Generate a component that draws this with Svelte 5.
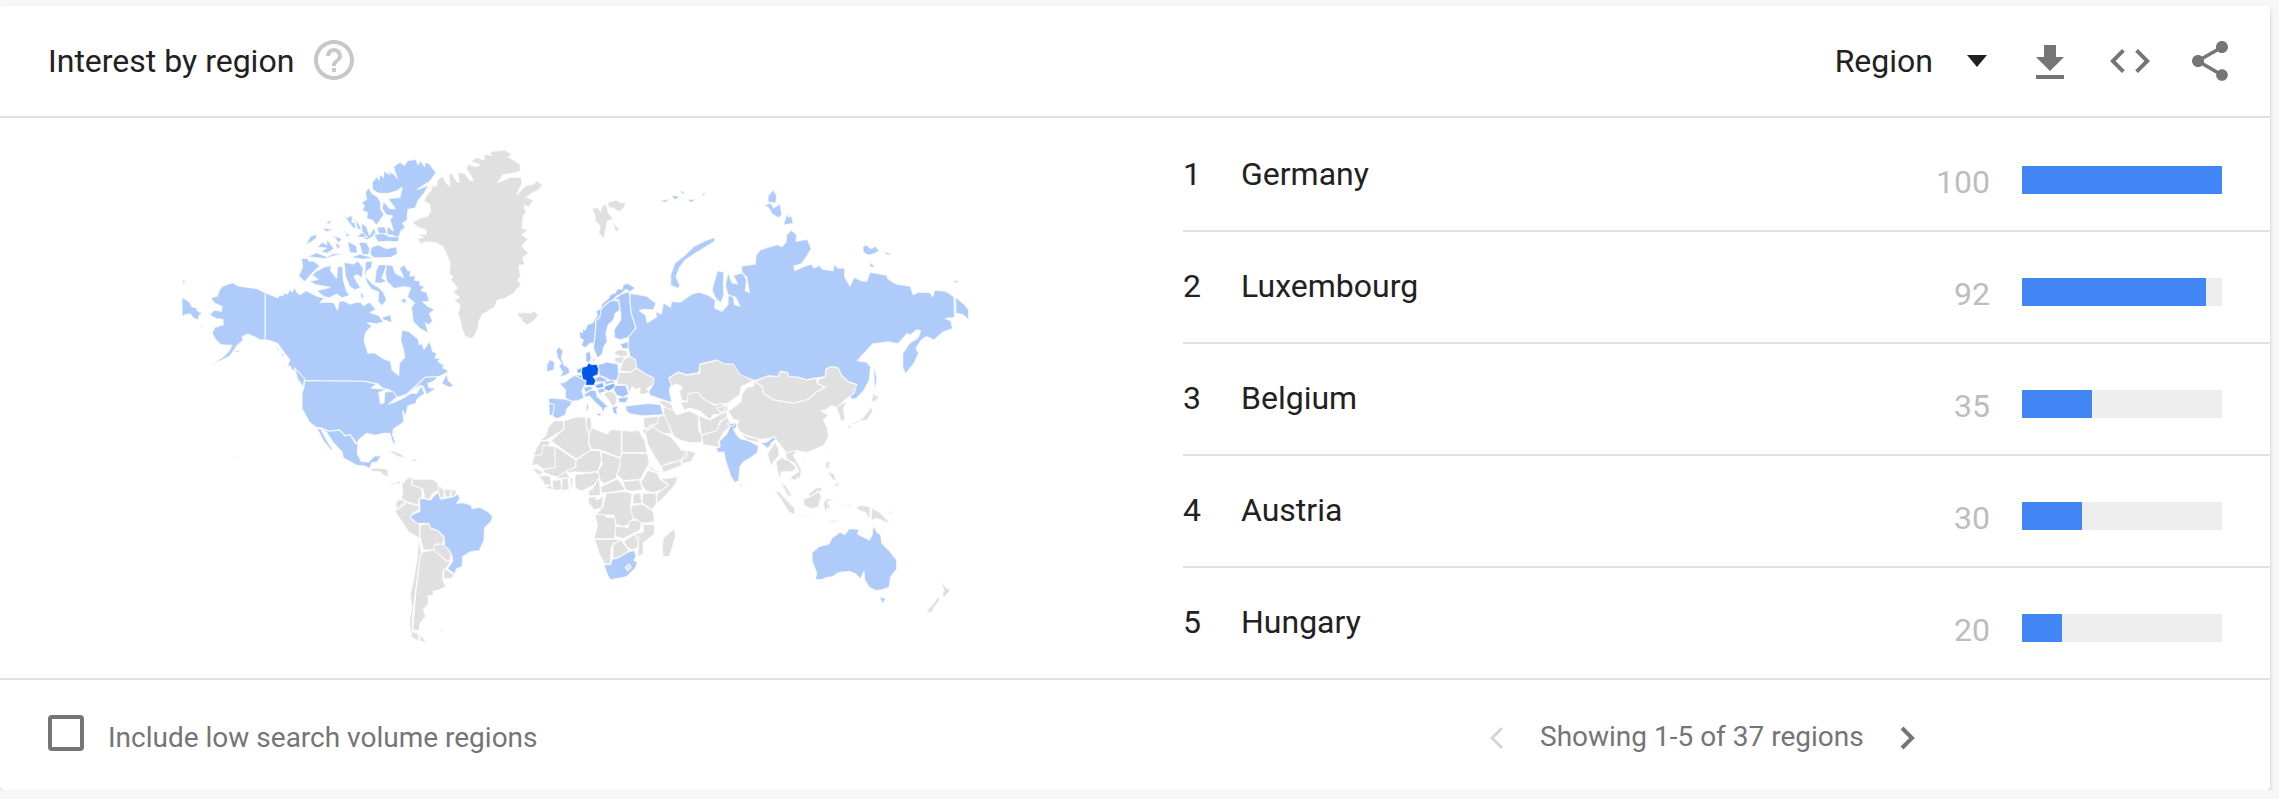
<script>
  const regions = [
    { name: 'Germany', value: 100 },
    { name: 'Luxembourg', value: 92 },
    { name: 'Belgium', value: 35 },
    { name: 'Austria', value: 30 },
    { name: 'Hungary', value: 20 }
  ];

  const B = '#aecbfa';
  const E = '#a8c6fa';
  const M = '#8ab2f8';
  const G = '#e0e0e0';

  // Each sheet of the map has its own origin; shapes are in thirds of a pixel.
  const sheets = [
    {
      x: 170, y: 140,
      shapes: [
        [B, 'M286,458 262,446 240,443 215,440 200,435 188,428 170,434 155,440 146,454 142,468 122,474 134,490 156,500 154,514 134,510 118,524 138,536 158,538 160,554 134,562 126,580 138,600 152,614 186,616 176,634 160,650 118,678 160,658 180,648 200,618 220,600 216,590 234,582 256,592 270,600 286,600Z'],
        [B, 'M36,470 58,486 66,500 80,504 82,512 98,520 88,526 84,540 70,534 60,522 46,524 36,530Z M36,420 48,424 40,432Z M88,554 104,558 98,561Z M194,634 212,630 204,638Z'],
        [B, 'M286,458 324,474 328,464 340,468 340,458 352,462 360,448 366,456 374,442 380,456 390,464 408,452 440,468 464,474 450,488 476,486 492,488 502,510 508,484 520,482 540,492 560,486 574,488 580,498 598,486 618,508 600,518 626,526 640,546 620,552 592,548 606,558 588,576 582,600 594,640 614,638 640,656 662,664 666,690 686,706 688,670 704,652 700,628 692,600 696,570 716,574 730,586 744,596 748,614 756,610 762,628 770,616 778,604 784,620 788,634 800,640 796,654 812,656 804,664 822,676 818,684 832,688 832,698 806,710 766,712 744,732 710,762 684,772 660,750 640,746 624,732 584,724 404,722 390,722 378,712 374,690 366,692 362,680 352,676 360,660 344,640 322,610 300,602 286,600Z'],
        [B, 'M404,722 584,724 620,732 604,744 650,748 626,758 632,792 642,788 644,756 668,754 682,770 656,792 680,784 700,774 722,760 740,760 754,736 764,762 750,770 740,780 738,790 714,798 706,830 698,812 702,846 670,868 668,884 678,914 668,908 660,880 640,880 616,886 590,880 566,900 562,912 540,884 526,888 508,870 478,874 455,864 438,862 418,846 396,806 396,760 402,740Z'],
        [B, 'M720,758 744,732 766,712 806,710 790,724 774,730 776,742 798,746 770,764 760,740 750,736Z M814,730 824,714 832,700 834,720 852,738 836,742Z'],
        [B, 'M440,864 478,874 508,870 526,888 540,884 556,910 564,912 562,940 574,964 596,966 612,948 634,946 622,966 606,968 600,986 584,978 560,976 520,954 516,936 490,908 470,878 454,870 470,900 488,928 484,932 460,902Z'],
        [B, 'M606,128 620,110 628,120 628,102 640,112 642,92 658,104 650,94 672,102 682,116 670,80 690,66 704,76 712,62 738,58 744,74 752,62 764,80 764,68 776,70 788,84 798,98 780,124 742,148 776,136 762,160 744,182 736,204 714,208 712,226 712,240 698,250 706,262 692,274 684,302 670,286 650,284 652,258 670,272 660,240 668,228 648,224 636,206 640,184 660,206 676,206 654,176 690,172 696,142 682,152 656,160 626,160 608,150Z'],
        [B, 'M596,142 606,160 622,170 632,186 632,206 642,224 620,256 606,240 590,236 592,218 576,210 584,198 574,190 590,176 586,158Z'],
        [B, 'M610,282 640,280 660,290 688,290 684,306 650,304 624,306Z M604,322 624,314 650,326 680,320 682,342 664,352 612,354 600,342Z M566,306 590,308 600,326 596,344 578,344Z M532,304 546,310 560,318 562,340 540,338Z M574,248 590,260 598,286 612,262 620,284 590,300 576,292Z M620,262 644,260 652,280 626,280Z'],
        [B, 'M516,218 530,232 548,226 546,248 558,246 562,268 550,264 538,250Z M552,236 558,264 576,272 566,250Z M518,262 528,280 542,284 530,292Z M550,190 556,206Z M576,276 592,292 560,292Z'],
        [B, 'M406,316 422,288 442,282 438,296 424,306Z M442,322 456,306 470,314 470,296 492,326 472,340 452,336 470,324Z M464,250 486,238 480,252Z M454,264 492,268 470,276Z M490,286 516,296 506,310Z M494,306 512,318 502,328Z M412,350 440,338 470,350 492,340 520,342 500,346 464,356Z'],
        [B, 'M394,356 412,354 418,364 430,362 450,378 430,396 404,426 386,408 398,380Z'],
        [B, 'M438,394 460,382 484,376 482,392 500,414 502,380 518,378 520,420 530,454 540,466 516,474 500,462 478,474 462,470 440,452 480,442 436,434 418,424 444,418 426,406Z'],
        [B, 'M522,366 550,372 564,362 580,384 576,414 560,404 552,410 572,444 554,450 540,440 526,410Z M586,366 608,362 604,384 590,394 588,410 606,430 628,444 640,456 650,480 636,498 624,484 626,456 604,448 590,428 584,400Z M568,452 582,466 576,480Z M540,352 570,342 612,354 580,358Z'],
        [B, 'M626,374 650,374 644,392 636,414 650,424 632,430 614,428 618,392Z M650,374 668,376 676,400 700,412 688,384 704,374 712,390 722,394 720,408 736,406 734,420 750,424 750,436 764,438 754,452 770,456 778,484 758,486 776,500 794,508 778,522 788,544 776,556 766,548 776,580 750,566 730,546 724,500 734,490 712,470 722,444 700,440 672,446 650,424 646,400Z M636,532 662,524 666,548 640,540Z M692,478 706,474 710,486 698,490Z'],
        [B, 'M190,952 196,956 193,961Z M318,616 328,628 324,634Z M330,632 342,646 338,654Z M342,668 348,686 342,680Z M374,684 404,716 400,740 384,720Z']
      ]
    },
    {
      x: 370, y: 140,
      shapes: [
        [G, 'M126,248 146,236 172,228 182,212 178,192 162,184 170,166 182,152 186,140 200,136 202,120 218,108 228,128 240,138 236,106 244,98 262,126 268,126 262,96 284,100 300,122 310,120 288,84 296,72 318,80 330,74 302,66 320,52 342,60 342,42 364,46 360,34 404,30 428,44 414,50 450,72 452,92 440,98 400,104 384,128 420,112 454,112 456,132 440,164 468,136 490,132 500,122 518,134 506,150 486,160 470,172 492,180 476,200 462,196 468,220 460,226 456,264 474,270 456,284 474,298 456,318 476,340 458,354 466,374 446,376 452,410 444,420 454,436 440,448 432,460 404,476 382,480 374,502 350,516 338,522 326,546 324,566 312,590 304,596 286,590 276,568 270,540 264,520 270,496 252,480 268,472 248,456 262,444 242,420 248,410 238,400 240,368 226,336 218,320 196,308 170,306 152,312 140,296 160,292 140,284 168,282 168,270 144,262Z'],
        [G, 'M444,516 458,520 452,510 466,518 482,520 492,512 506,526 492,542 472,556 458,546 454,536 444,530Z'],
        [G, 'M666,206 682,202 692,214 696,196 710,194 714,216 730,236 712,244 708,266 702,296 686,280 690,258 676,244 674,226Z M712,186 740,180 752,188 768,186 762,204 746,216 732,206 716,202Z M728,244 736,256 750,268 738,276 732,262Z']
      ]
    },
    {
      x: 520, y: 280,
      shapes: [
        [E, 'M178,154 188,158 186,148 196,150 202,134 218,128 232,106 228,92 240,88 246,72 262,58 272,44 286,38 292,26 306,28 310,14 324,10 346,24 330,36 318,28 304,42 290,48 280,60 266,66 246,84 240,112 228,122 226,160 222,190 210,190 196,204 184,196 190,180 180,174Z'],
        [E, 'M244,86 266,66 280,60 296,64 300,90 286,100 280,120 264,136 258,160 262,184 252,200 246,224 232,234 220,204 226,160 228,122 240,112Z'],
        [E, 'M280,60 304,42 328,34 330,64 334,100 342,124 348,144 330,170 302,180 284,174 282,150 302,120 302,96 296,60Z'],
        [E, 'M196,220 210,212 214,236 206,250 198,244Z M216,238 226,236 222,248Z M300,192 326,184 326,206 308,206Z'],
        [B, 'M116,200 130,212 124,232 132,254 146,264 150,278 136,286 118,292 128,276 116,258 124,250 112,232 108,212Z M80,254 90,238 104,246 102,270 80,276Z'],
        [G, 'M282,216 300,208 320,212 324,226 310,232 290,226Z M284,232 310,230 314,240 304,252 284,246Z M312,236 330,230 346,238 350,264 336,278 298,272Z'],
        [G, 'M296,276 330,278 350,264 378,282 402,294 402,312 380,326 390,336 370,344 358,340 360,324 346,328 336,320 326,342 322,316 306,314 290,312Z'],
        [E, 'M234,254 260,246 294,252 296,282 290,302 272,302 254,292 238,286Z'],
        [M, 'M170,268 188,262 186,278 172,280Z M166,284 186,286 188,300Z'],
        [B, 'M118,310 136,306 150,294 164,286 190,298 200,306 192,318 186,334 192,354 174,362 154,364 136,354 136,330Z'],
        [B, 'M84,356 102,354 136,358 156,364 152,376 140,388 136,406 110,416 96,408 98,380 90,372 86,364Z'],
        [B, 'M86,370 104,374 98,406 88,406Z'],
        [E, 'M190,322 212,318 220,328 196,338Z'],
        [M, 'M222,316 250,306 252,322 232,326Z M254,318 284,308 286,322 266,334 252,328Z'],
        [E, 'M222,296 240,288 264,300 252,306 230,306Z M254,304 284,300 282,308 256,314Z'],
        [E, 'M286,316 318,316 326,342 310,352 290,346 280,330Z M294,354 326,350 318,368 298,368Z'],
        [E, 'M192,344 212,330 228,332 232,350 250,366 266,382 254,384 250,402 244,384 224,366 208,348 196,352Z M226,400 246,400 240,410Z M200,374 206,372 204,392 198,390Z M232,328 250,324 258,334 240,340 252,354 238,344Z'],
        [G, 'M250,344 262,334 282,336 290,352 290,368 278,382 272,370 262,356Z'],
        [E, 'M276,382 296,376 290,388 292,404 280,400Z'],
        [B, 'M316,378 350,374 386,370 422,374 430,404 398,406 366,408 330,402 318,392Z'],
        [G, 'M412,360 440,364 456,374 462,394 444,392 426,374Z'],
        [G, 'M446,296 474,276 500,286 540,280 538,254 570,246 598,238 614,248 642,248 664,280 700,302 664,320 660,344 624,370 584,374 566,366 546,354 536,338 508,344 502,366 484,360 478,334 488,322 470,312 454,320Z'],
        [G, 'M482,366 502,366 504,342 534,336 546,354 584,376 604,370 620,380 604,402 580,404 570,420 540,394 510,384 492,390Z M590,384 626,374 622,396 600,396Z'],
        [G, 'M430,380 462,392 470,404 508,392 536,406 536,452 548,468 544,488 510,488 480,480 462,470 444,432 432,410Z'],
        [G, 'M536,406 570,420 598,404 620,394 622,412 600,424 590,452 544,464Z M544,466 590,452 602,424 622,410 634,436 612,456 596,484 598,502 550,494Z'],
        [G, 'M370,414 398,410 416,410 412,430 386,446 372,442Z M416,410 432,404 446,434 456,462 430,460 386,438 412,430Z M368,446 386,448 380,470 370,460Z'],
        [G, 'M376,456 398,440 430,460 452,470 470,490 484,510 502,514 500,532 482,540 424,560 400,524 382,492Z M424,560 446,548 482,542 486,556 430,578Z M502,510 528,518 514,544 488,552 484,540Z'],
        [B, 'M622,430 648,428 650,444 640,446 650,464 660,476 686,482 716,498 712,518 694,532 668,548 660,560 656,602 644,608 632,588 616,540 612,516 594,518 588,506 600,500 598,484 620,462 630,440Z'],
        ['#bdbdbd', 'M630,430 642,430 640,438 630,436Z'],
        [G, 'M658,604 668,616 662,622Z'],
        ['#0057e7', 'M186,262 200,258 206,248 216,254 230,252 236,266 234,284 220,290 228,302 222,316 196,316 198,302 188,298 184,278Z']
      ]
    },
    {
      x: 700, y: 180,
      shapes: [
        [B, 'M-210,340 -160,348 -132,370 -140,390 -170,388 -182,392 -164,404 -158,428 -130,410 -134,394 -116,402 -110,368 -88,382 -86,364 -58,366 -24,342 -4,336 26,346 46,360 44,384 66,394 84,374 84,346 100,350 104,374 120,378 106,352 84,344 76,318 84,276 96,308 112,312 100,286 128,278 140,300 136,332 148,338 140,290 126,278 124,258 166,252 168,226 180,210 204,202 232,194 246,200 258,186 260,164 274,150 290,164 288,184 322,178 334,206 320,230 304,252 282,258 284,272 310,260 334,252 342,264 358,256 368,268 400,272 402,252 414,264 434,264 434,290 450,318 462,292 484,302 500,304 510,276 560,286 564,296 588,312 630,318 640,344 656,336 690,338 698,350 704,330 738,334 762,350 764,412 736,416 752,422 758,446 730,456 702,480 680,470 664,480 648,504 656,520 642,550 616,582 608,560 608,520 630,488 654,474 662,452 650,450 630,466 622,460 594,492 566,486 518,492 472,542 500,546 512,560 508,600 490,634 468,656 454,658 448,642 470,614 446,606 424,586 414,564 392,560 378,568 376,590 350,594 318,600 296,592 266,590 262,578 242,574 234,590 204,588 164,602 120,584 100,552 74,552 52,540 0,552 -4,578 -40,584 -66,576 -94,594 -86,614 -92,630 -84,668 -104,662 -150,646 -154,636 -140,612 -138,594 -162,582 -190,564 -194,538 -210,530 -216,500 -214,470 -192,444 -198,424 -206,400 -210,364Z'],
        [B, 'M36,330 52,272 72,276 70,310 72,346 62,370 46,354Z'],
        [B, 'M766,350 794,374 806,390 806,420 788,404 768,400Z M488,200 498,194 514,206 526,198 538,212 526,220 506,226 490,218Z M548,212 576,222 562,226Z M514,248 526,262 506,260Z M758,308 770,300 776,308Z'],
        [B, 'M204,48 220,28 230,48 228,70 204,66Z M192,74 214,70 220,84 240,72 246,104 236,114 216,102 206,84Z M250,136 262,98 266,112 274,106 280,130Z'],
        [B, 'M-88,284 -76,250 -46,226 -20,200 20,180 44,172 44,184 16,202 -14,220 -44,240 -62,264 -72,290 -60,316 -66,326 -88,316Z M-120,62 -90,56 -104,68Z M-86,44 -60,50 -76,60Z M-60,30 -46,36 -52,44Z M-40,58 -12,58 -26,68Z M4,44 20,34 12,48Z'],
        [B, 'M520,552 530,590 530,606 524,632Z'],
        [G, 'M164,604 204,588 234,590 242,574 262,578 266,590 296,592 318,600 350,594 352,610 376,622 350,636 324,658 280,670 222,660 190,640 188,622Z'],
        [G, 'M164,604 188,622 190,640 222,660 280,670 324,658 350,636 376,622 352,610 356,598 376,590 378,568 392,560 414,564 424,586 446,606 470,614 462,640 440,656 410,684 396,676 376,690 364,692 386,706 370,720 382,742 386,770 372,796 346,808 320,818 292,812 262,824 240,794 224,774 180,778 140,766 120,756 110,736 116,722 100,718 84,694 124,664 124,644 140,622 160,618Z'],
        [G, 'M408,682 424,672 442,664 430,686 436,716 424,726 418,708Z'],
        [G, 'M514,676 518,694 502,720 478,724 464,734 452,732 470,724 490,712 506,692Z M520,640 538,652 524,666 514,662Z M444,734 456,740 444,748Z'],
        [G, 'M380,802 388,800 382,818Z M120,758 140,768 176,778 176,788 140,780Z'],
        [B, 'M180,790 200,786 222,770 228,778 214,790 204,806 192,796Z']
      ]
    },
    {
      x: 370, y: 440,
      shapes: [
        [G, 'M2,84 26,84 54,88 54,112 38,104 30,96 6,94Z M56,118 70,130 90,122 94,132 82,130 66,134Z'],
        [G, 'M46,40 68,32 90,40 110,54 84,50 64,38Z M118,64 132,56 148,64Z M92,64 104,66Z M160,64 174,65Z'],
        [G, 'M96,132 112,114 126,110 124,134 156,146 156,170 146,180 146,196 110,186 92,176 98,160Z'],
        [G, 'M126,114 136,118 160,118 188,118 204,130 206,150 186,162 180,178 164,176 158,146 126,136Z M206,136 222,150 222,172 212,174 204,156Z M222,148 244,148 240,170 226,172Z M246,148 260,152 254,170 242,168Z'],
        [G, 'M78,190 84,178 106,182 104,194 80,210Z M74,212 106,186 146,198 148,208 122,226 130,244 148,248 150,296 116,276 96,246Z'],
        [G, 'M150,256 176,250 182,264 204,272 222,290 220,312 196,312 190,330 160,330 150,290Z M194,314 222,312 240,330 244,358 230,366 214,350 190,334Z'],
        [G, 'M146,300 154,334 144,400 136,460 128,530 126,570 134,600 122,590 118,540 126,500 120,470 130,420 142,350Z'],
        [G, 'M156,336 190,330 212,348 230,364 244,360 230,384 218,396 218,418 228,440 206,450 190,454 190,466 174,468 176,490 160,510 168,528 150,550 148,572 128,570 134,500 138,450 146,392 150,350Z'],
        [G, 'M222,386 252,402 246,416 220,416Z M146,580 170,606 152,604Z M206,568 220,570 212,576Z M122,574 144,580 148,604 126,592Z'],
        [B, 'M148,176 164,176 180,180 204,156 212,178 250,170 264,162 270,176 260,190 280,188 304,196 306,206 330,202 350,212 368,228 364,244 344,264 342,300 328,332 300,336 278,350 276,380 260,386 254,402 232,386 248,364 246,348 238,330 224,318 222,290 204,272 182,264 176,250 142,250 124,236 122,226 150,214Z']
      ]
    },
    {
      x: 520, y: 390,
      shapes: [
        [G, 'M102,92 132,92 132,118 90,144 74,152 60,152 78,136 84,112Z'],
        [G, 'M62,152 90,152 88,166 68,166 66,194 42,198 36,220 38,204 48,176Z M40,198 66,194 68,166 104,168 108,232 72,238 50,224 36,228Z'],
        [G, 'M132,92 164,82 196,80 200,110 208,136 206,160 214,180 168,208 92,152 132,118Z'],
        [G, 'M200,84 212,80 216,112 208,130 198,110Z M208,130 216,114 246,126 262,132 274,118 304,122 304,204 240,180 214,178 206,158Z'],
        [G, 'M306,120 332,124 356,120 364,134 374,150 382,188 306,188Z'],
        [G, 'M104,168 168,210 166,232 136,246 116,262 92,256 70,246 72,238 106,232Z'],
        [G, 'M168,210 214,180 240,182 246,210 234,244 196,248 168,246 144,248 140,242 168,232Z'],
        [G, 'M242,184 302,206 300,230 290,254 290,264 252,282 240,272 234,244 246,222Z'],
        [G, 'M306,190 382,190 388,220 376,240 362,268 340,270 310,272 290,254 300,230 300,204Z'],
        [G, 'M34,232 60,240 70,248 58,256 48,248Z M54,258 72,256 92,260 94,284 74,286 66,270Z M74,290 94,286 98,302Z'],
        [G, 'M96,272 122,268 126,300 98,300Z M110,262 138,244 152,264 122,266Z M126,264 144,264 148,298 126,302Z M150,266 158,262 158,292 152,294Z'],
        [G, 'M166,254 232,246 240,260 222,286 196,298 184,304 166,294 164,272Z'],
        [G, 'M206,302 218,296 238,262 240,296 242,316 206,318Z M242,290 292,266 306,284 318,300 266,308 244,308Z'],
        [G, 'M308,274 340,272 358,268 368,300 330,304 316,298Z M362,278 372,260 384,240 412,250 420,268 446,284 428,300 400,308 376,302Z'],
        [G, 'M384,220 404,240 420,244 412,248 392,240Z M420,266 444,264 474,260 466,284 436,318 410,342 410,312 446,284Z'],
        [G, 'M206,322 226,320 230,330 250,318 246,354 222,360 204,338Z M228,372 248,352 258,310 320,304 336,312 332,352 342,384 326,404 312,410 288,404 282,376 228,374Z'],
        [G, 'M340,312 362,308 366,340 338,342Z M368,310 408,310 410,342 396,360 366,338Z M336,346 366,342 400,364 404,396 366,400 340,384 332,362Z'],
        [G, 'M224,374 256,374 260,382 282,382 288,408 284,446 222,446 232,406Z M286,408 324,412 330,392 352,390 364,400 360,420 310,446 286,440Z'],
        [G, 'M370,402 404,404 404,432 370,458 370,492 352,500 356,458 342,432 370,426Z M312,452 342,434 356,440 354,470 340,480 320,472Z'],
        [G, 'M224,448 300,448 274,470 272,522 254,522 238,494Z M278,460 304,450 318,470 328,482 294,504 278,506Z'],
        [B, 'M252,524 272,524 276,508 294,504 328,484 344,482 348,500 342,512 352,516 346,534 320,560 270,570 260,548Z'],
        [G, 'M316,532 328,522 334,532 322,542Z M462,416 468,436 448,500 430,500 426,480 430,444Z']
      ]
    },
    {
      x: 720, y: 380,
      shapes: [
        [B, 'M286,598 290,580 276,542 276,518 296,500 326,492 336,474 350,464 360,456 374,464 388,446 418,448 412,462 448,480 456,466 460,436 472,458 482,464 486,490 508,512 530,540 530,568 512,590 508,622 484,630 468,632 448,622 434,600 432,574 420,598 408,582 388,574 354,578 338,590 316,594 304,600Z M478,652 498,654 488,672Z'],
        [G, 'M142,222 160,194 164,184 176,206 178,226 164,242 152,258Z M168,246 184,232 210,244 230,264 218,274 200,276 184,276 180,300 172,272Z M196,218 232,212 220,226 244,268 242,290 222,302 210,292 236,274 224,250 200,238Z M182,306 198,318 214,344 212,352 200,342Z'],
        [G, 'M162,330 180,338 200,360 224,384 224,404 206,396 184,360Z M226,406 256,408 290,416 260,412Z M248,358 270,350 296,332 304,350 294,382 274,386 254,378Z M282,328 300,320 308,330 270,350 264,344Z'],
        [G, 'M310,368 318,356 346,358 322,366 334,388 322,384 316,400Z M318,244 330,246 326,266 316,264Z M320,272 342,282 350,300 338,300Z M340,314 354,306 356,322Z M326,200 322,214Z M320,424 350,420 364,418 340,428Z M376,372 400,376 388,380Z'],
        [G, 'M408,380 424,376 450,380 450,418 436,398 414,390Z M454,382 480,398 494,412 512,430 496,426 470,414 454,422Z M500,400 526,392 512,402Z'],
        [G, 'M662,602 676,620 692,630 672,654 666,642 672,634Z M652,652 662,656 644,680 634,698 618,694 636,676Z M248,236 254,238 250,242Z'],
        [G, 'M366,356 372,368Z M608,496 618,508Z M684,480 702,470Z M622,704 628,704Z']
      ]
    }
  ];
</script>

<main class="card">
  <header>
    <h1>Interest by region</h1>
    <svg class="help" viewBox="2 2 20 20"><path d="M11 18h2v-2h-2v2zm1-16C6.48 2 2 6.48 2 12s4.48 10 10 10 10-4.48 10-10S17.52 2 12 2zm0 18c-4.41 0-8-3.59-8-8s3.59-8 8-8 8 3.59 8 8-3.59 8-8 8zm0-14c-2.21 0-4 1.79-4 4h2c0-1.1.9-2 2-2s2 .9 2 2c0 2-3 1.75-3 5h2c0-2.25 3-2.5 3-5 0-2.21-1.79-4-4-4z" /></svg>
    <div class="select">Region<i class="caret"></i></div>
    <div class="actions">
      <svg viewBox="0 0 24 24"><path d="M19 10h-4V4H9v6H5l7 7 7-7zM5 19v2h14v-2H5z" /></svg>
      <svg viewBox="0 0 24 24"><path d="M9.4 16.6L4.8 12l4.6-4.6L8 6l-6 6 6 6 1.4-1.4zm5.2 0l4.6-4.6-4.6-4.6L16 6l6 6-6 6-1.4-1.4z" /></svg>
      <svg viewBox="0 0 24 24"><path d="M18 16.08c-.76 0-1.44.3-1.96.77L8.91 12.7c.05-.23.09-.46.09-.7s-.04-.47-.09-.7l7.05-4.11c.54.5 1.25.81 2.04.81 1.66 0 3-1.34 3-3s-1.34-3-3-3-3 1.34-3 3c0 .24.04.47.09.7L8.04 9.81C7.5 9.31 6.79 9 6 9c-1.66 0-3 1.34-3 3s1.34 3 3 3c.79 0 1.5-.31 2.04-.81l7.12 4.16c-.05.21-.08.43-.08.65 0 1.61 1.31 2.92 2.92 2.92s2.92-1.31 2.92-2.92-1.31-2.92-2.92-2.92z" /></svg>
    </div>
  </header>

  <section class="body">
    <svg class="map" viewBox="0 118 1183 560">
      {#each sheets as sheet}
        <g transform="translate({sheet.x} {sheet.y}) scale(0.33333)">
          {#each sheet.shapes as [fill, d]}
            <path {d} {fill} />
          {/each}
        </g>
      {/each}
    </svg>
    <ol>
      {#each regions as region, i}
        <li>
          <span class="rank">{i + 1}</span>
          <span class="name">{region.name}</span>
          <span class="value">{region.value}</span>
          <div class="track"><div class="fill" style="width: {region.value}%"></div></div>
        </li>
      {/each}
    </ol>
  </section>

  <footer>
    <label><i class="box"></i><span>Include low search volume regions</span></label>
    <nav>
      <svg class="off" viewBox="0 0 15 24"><path d="M13 2 3 12l10 10" /></svg>
      <span>Showing 1-5 of 37 regions</span>
      <svg viewBox="0 0 15 24"><path d="m2 2 10 10L2 22" /></svg>
    </nav>
  </footer>
</main>

<style>
  :global(body) {
    background: #f7f7f7;
    overflow: hidden;
  }
  .card {
    box-sizing: border-box;
    width: 2270px;
    height: 784px;
    margin-top: 6px;
    display: flex;
    flex-direction: column;
    background: #fff;
    border-radius: 4px;
    box-shadow: 0 4px 4px rgba(0, 0, 0, 0.14), 0 1px 4px rgba(0, 0, 0, 0.06);
    font-family: Roboto, sans-serif;
    font-size: 32px;
    color: #212121;
  }
  header {
    box-sizing: border-box;
    height: 112px;
    padding: 0 36px 0 48px;
    display: flex;
    align-items: center;
    border-bottom: 2px solid #e0e0e0;
    flex: none;
  }
  h1 {
    margin: 0;
    font-size: 32px;
    line-height: 40px;
    font-weight: 400;
  }
  .help {
    width: 40px;
    height: 40px;
    margin: 0 auto 2px 20px;
    fill: #c8c8c8;
  }
  .select {
    display: flex;
    align-items: center;
    line-height: 40px;
  }
  .caret {
    margin: 0 39px 0 34px;
    border: 10px solid transparent;
    border-top: 12px solid #212121;
    border-bottom: 0;
  }
  .actions {
    display: flex;
    gap: 32px;
  }
  .actions svg {
    width: 48px;
    height: 48px;
    fill: #757575;
  }
  .body {
    display: flex;
    height: 560px;
    flex: none;
  }
  .map {
    width: 1183px;
    height: 560px;
  }
  .map path {
    stroke: #fff;
    stroke-opacity: 0.68;
    stroke-width: 4;
    stroke-linejoin: round;
  }
  ol {
    flex: 1;
    margin: 0;
    padding: 2px 0 0;
    list-style: none;
  }
  li {
    box-sizing: border-box;
    height: 112px;
    padding-right: 48px;
    display: grid;
    grid-template-columns: 58px 1fr auto 200px;
    align-items: start;
    border-bottom: 2px solid #e0e0e0;
    line-height: 40px;
  }
  li:last-child {
    border: 0;
    height: 110px;
  }
  .rank,
  .name {
    padding-top: 34px;
  }
  .value {
    padding: 42px 32px 0 0;
    color: #bdbdbd;
  }
  .track {
    margin-top: 46px;
    height: 28px;
    background: #eee;
  }
  .fill {
    height: 100%;
    background: #4285f4;
  }
  footer {
    box-sizing: border-box;
    flex: 1;
    display: flex;
    align-items: center;
    border-top: 2px solid #e0e0e0;
    padding-left: 48px;
    font-size: 28px;
    color: #757575;
  }
  label {
    width: 1441px;
    display: flex;
    align-items: center;
    gap: 24px;
  }
  .box {
    box-sizing: border-box;
    width: 36px;
    height: 36px;
    border: 4px solid #757575;
    border-radius: 4px;
    margin-bottom: 4px;
  }
  label span {
    padding-top: 4px;
  }
  nav {
    display: flex;
    align-items: center;
    gap: 36px;
  }
  nav span {
    padding-top: 2px;
  }
  nav svg {
    width: 15px;
    height: 24px;
    margin-top: 6px;
    fill: none;
    stroke: #757575;
    stroke-width: 4;
  }
  nav .off {
    stroke: #d6d6d6;
    stroke-width: 3;
  }
</style>
